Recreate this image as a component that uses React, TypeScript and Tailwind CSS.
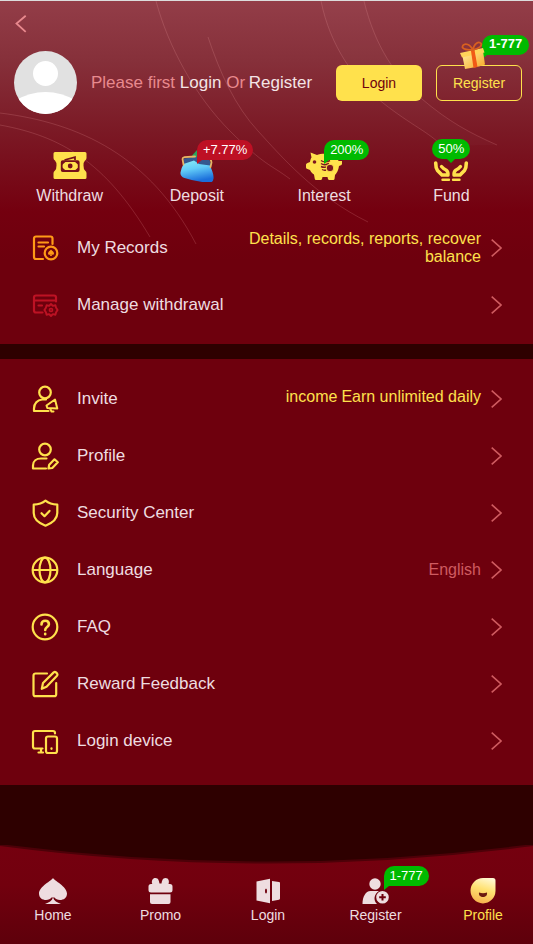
import type { ReactNode } from "react"
import clsx from "clsx"

const line = {
  width: 28,
  height: 28,
  viewBox: "0 0 28 28",
  fill: "none",
  stroke: "currentColor",
  strokeWidth: 2.2,
  strokeLinecap: "round",
  strokeLinejoin: "round",
  "aria-hidden": true,
} as const

const solid = { width: 28, height: 28, viewBox: "0 0 28 28", fill: "currentColor", "aria-hidden": true } as const

const RecordsIcon = () => (
  <svg {...line}>
    <path d="M21.500 10V4.500a2 2 0 0 0-2-2H5a2 2 0 0 0-2 2V23a2 2 0 0 0 2 2h7" />
    <path d="M7.500 8.500H17M7.500 12.500H13" />
    <circle cx="20" cy="19" r="6.300" />
    <path
      d="M20 15.500c-1 1.300-3 2.300-3 3.900 0 1.500 1.700 1.800 2.600.9l-.6 1.700h2l-.6-1.700c.9.9 2.600.6 2.600-.9 0-1.600-2-2.600-3-3.900Z"
      fill="currentColor"
      stroke="none"
    />
  </svg>
)

const CardIcon = () => (
  <svg {...line}>
    <path d="M25 10.500V6.500a2 2 0 0 0-2-2H5a2 2 0 0 0-2 2v13a2 2 0 0 0 2 2h6.500M3 9.500h22M7.500 14.500h3.500" />
    <path d="m20 13 1.800 1.900 2.600-.6.700 2.500L26.600 19l-1.500 2.200-.7 2.500-2.600-.6L20 25l-1.800-1.900-2.600.6-.7-2.500-1.500-2.200 1.500-2.200.7-2.500 2.600.6Z" strokeWidth="1.900" />
    <circle cx="20" cy="19" r="1.500" strokeWidth="1.700" />
  </svg>
)

const InviteIcon = () => (
  <svg {...line}>
    <circle cx="14" cy="7.500" r="5.800" />
    <path d="M17.500 26H3v-2.500C3 18.500 6.500 15 11 14.500h4" />
    <path d="m15.500 20.500 8.500-6 2.300 9-10-.5ZM19 23.500l1.500 3h2" strokeWidth="2" />
  </svg>
)

const ProfileIcon = () => (
  <svg {...line}>
    <circle cx="14" cy="7.500" r="5.800" />
    <path d="M15 26.500H2v-3C2 19 5.500 16.500 10 16.500h5.500" />
    <path d="m17.500 26.500.7-3.700 5.300-5.500 3.300 3-5.500 5.700Z" />
  </svg>
)

const ShieldIcon = () => (
  <svg {...line}>
    <path d="M14.500 1.700c3 2.500 7.500 3.800 11.800 4V14c0 6-5 10-11.800 12.700C7.500 24 2.700 20 2.700 14V5.700c4.300-.2 8.800-1.500 11.800-4Z" />
    <path d="m10.500 14.200 3 3 5-5.300" />
  </svg>
)

const GlobeIcon = () => (
  <svg {...line}>
    <circle cx="14" cy="14" r="12.300" />
    <ellipse cx="14" cy="14" rx="5.500" ry="12.300" />
    <path d="M2 14h24" />
  </svg>
)

const QuestionIcon = () => (
  <svg {...line}>
    <circle cx="14" cy="14" r="12.300" />
    <path d="M10.500 11.500c0-2.300 1.600-3.700 3.700-3.700s3.700 1.400 3.700 3.500c0 2.700-3.700 2.800-3.700 5.700M14.200 20.700v.6" strokeWidth="2.600" />
  </svg>
)

const EditIcon = () => (
  <svg {...line}>
    <path d="M16 3.500H4.500a2 2 0 0 0-2 2v18.700a2 2 0 0 0 2 2h18.700a2 2 0 0 0 2-2V13" />
    <path d="m10.800 18.800 1.200-5.800L22.700 2.400q1.200-.9 2.300 0l1 1q.9 1.100 0 2.300L15.500 16.700Z" />
  </svg>
)

const DeviceIcon = () => (
  <svg {...line}>
    <path d="M24 6.500V6a2 2 0 0 0-2-2H4a2 2 0 0 0-2 2v13.500a2 2 0 0 0 2 2h7.500M10 21.500V25M7.500 25.500H12" />
    <rect x="15" y="9.500" width="11" height="16.500" rx="2" />
    <path d="M20.500 21.500v.3" strokeWidth="2.300" />
  </svg>
)

const Chevron = () => (
  <svg width="11" height="18" viewBox="0 0 11 18" fill="none" stroke="#cf5b60" strokeWidth="1.600" aria-hidden="true">
    <path d="m.7.7 9.300 8.300-9.300 8.300" />
  </svg>
)

const TicketIcon = () => (
  <svg width="36" height="32" viewBox="0 0 36 32" aria-hidden="true">
    <path
      d="M3 2h30q1.500 0 1.500 1.500V8q0 1.500-1.500 2.500-1.500 1.500-1.500 5t1.500 5q1.500 1 1.500 2.500v4.500q0 1.500-1.500 1.500H3q-1.500 0-1.500-1.500V23q0-1.500 1.500-2.500 1.500-1.500 1.500-5T3 10.500Q1.500 9.500 1.500 8V3.500Q1.500 2 3 2Z"
      fill="#ffe14c"
    />
    <rect x="9.700" y="11.200" width="17" height="9.800" rx="1" fill="none" stroke="#76101a" strokeWidth="1.800" />
    <path d="M10 11.500h4l-4 3.500ZM26.500 11.500h-4l4 3.500ZM10 20.800h4l-4-3.500ZM26.500 20.800h-4l4-3.500Z" fill="#76101a" />
    <circle cx="18.200" cy="16" r="2.400" fill="#76101a" />
    <path d="m12.500 10 10.500-2.800V10" fill="none" stroke="#76101a" strokeWidth="1.700" />
  </svg>
)

const PurseIcon = () => (
  <svg width="36" height="32" viewBox="0 0 36 32" aria-hidden="true">
    <defs>
      <linearGradient id="purse" x1="0" y1="0" x2="0.300" y2="1">
        <stop offset="0" stopColor="#8beef5" />
        <stop offset="0.450" stopColor="#62ccf8" />
        <stop offset="1" stopColor="#1b6edb" />
      </linearGradient>
    </defs>
    <path d="m12 9 1.500-4L18 0v10Z" fill="#2ba45b" />
    <path d="M4.500 8.500 18 7l11.500 1 3 7-4 3L5 15Z" fill="#35588f" />
    <path
      d="M4.500 14 15 10.500 20 14l11 1.500c1.500 4 4 8.500 3.500 13q-.5 4.500-5 4-12-.5-24-4.500-4.500-1.500-4-5.500Q2 18.500 4.500 14Z"
      fill="url(#purse)"
    />
    <path d="M4.500 14.500 3.500 9q0-1.500 2-1.800L16 6.500M31.500 17l1-4.500Q32 8 28.500 7.500" fill="none" stroke="#e6b667" strokeWidth="1.800" strokeLinecap="round" />
  </svg>
)

const PiggyIcon = () => (
  <svg width="36" height="32" viewBox="0 0 36 32" aria-hidden="true">
    <path
      d="M4.500 2.500 11 5c3-1.500 13-2 17 .5 2.500 1.500 4 3.500 4.500 5.500h4.500l-1.500 4-2.500 1c-.5 4-2 7-4 9l-.5 4q-.2 1-1.200 1h-4q-1 0-1.300-1l-.5-2h-5l-.5 2q-.3 1-1.300 1H10q-1 0-1.200-1L8 24.500c-1.500-1-3-2.500-4-4.500L1.500 19Q0 18.500 0 17.500v-3q0-1 1.500-1.500L4 12c.3-2 .8-3.500 1.500-4.500Z"
      fill="#ffe14c"
    />
    <circle cx="8.500" cy="12" r="1.800" fill="#7d1720" />
    <g stroke="#7d1720" strokeWidth="1.400" fill="none">
      <path d="M15 10.500c2 1.500 6 1.500 9 0M15 13.500c2 1.500 5 1.500 8 0M15 16.500c2 1 3.500 1 5 .5M16 19.500c1.500.8 3 .8 4 .5" />
    </g>
    <circle cx="24" cy="18" r="3.800" fill="#7d1720" stroke="#ffe14c" />
  </svg>
)

const HandsIcon = () => (
  <svg width="36" height="32" viewBox="0 0 36 32" fill="none" stroke="#ffe14c" strokeLinecap="round" strokeLinejoin="round" aria-hidden="true">
    <path d="M2.700 13c0 3 0 5 1.800 7.500L9 25h5M33.300 13c0 3 0 5-1.800 7.500L27 25h-5" strokeWidth="3.600" />
    <path d="M8.500 16.500q2 2.500 4.500 3.500 2.300 1.500 2 5M27.500 16.500q-2 2.500-4.500 3.500-2.300 1.500-2 5" strokeWidth="3.400" />
    <path d="M9.500 29.800h6.500M20 29.800h6.500" strokeWidth="2.400" />
  </svg>
)

const GiftIcon = () => (
  <svg width="28" height="28" viewBox="0 0 28 28" aria-hidden="true">
    <defs>
      <linearGradient id="gift" x1="0" y1="0" x2="1" y2="1">
        <stop offset="0" stopColor="#fff0a0" />
        <stop offset="1" stopColor="#f8a524" />
      </linearGradient>
    </defs>
    <path d="m3 13 21-3 2 13.500-6 2L6 28Z" fill="url(#gift)" />
    <path d="m1 12 23-5 1.500 4.500L3 16.500Z" fill="#ffd45a" />
    <path d="m12 10 3.500-1 3 17-4 1Z" fill="#f15a16" />
    <path d="M14 9C9 0 3 3 3.500 6.500 5 9 10 9 14 9ZM14 9c1-7 6-9 8-6.500Q24 6 14 9Z" fill="none" stroke="#d9601f" strokeWidth="1.800" />
  </svg>
)

const SpadeIcon = () => (
  <svg {...solid}>
    <path d="M14 1c1 2.500 14 8.500 14 15.500 0 4.500-3.500 6.500-7 6.500-2.500 0-4.500-1-5.500-2.500h-3C11.500 22 9.500 23 7 23c-3.500 0-7-2-7-6.500C0 9.500 13 3.500 14 1Z" />
    <path d="M14 20.500c1 3.500 4 5 8 6.500H6c4-1.500 7-3 8-6.500Z" />
  </svg>
)

const PromoIcon = () => (
  <svg {...solid}>
    <path d="M8.500 1C5.500 1 4.500 3.500 5 6.500l.5.500H4Q1.500 7 1.500 9.500V13q0 2.500 2.500 2.500h19q2.500 0 2.500-2.500V9.500Q25.500 7 23 7h-1.500C22.500 4 21.500 1 18.500 1 15.500 1 15 4 14.500 6.500h-2C12 4 11.500 1 8.500 1Z" />
    <path d="M3 17.200h20.500v7.800q0 2-2 2H5q-2 0-2-2Z" />
  </svg>
)

const DoorIcon = () => (
  <svg {...solid}>
    <path
      fillRule="evenodd"
      d="M2.500 4.500 16 1.800v24.500L2.500 23.500ZM12 11.500q-1 0-1 2.500t1 2.500 1-2.500-1-2.500Z"
    />
    <path d="m18 4 7 1q1 .2 1 1v15.500q0 1-1 1.200L18 24Z" />
  </svg>
)

const AddUserIcon = () => (
  <svg {...solid}>
    <circle cx="13" cy="7" r="5.700" />
    <path d="M.5 27c0-7 3-13 8-13h8.500c-5 3-6 9-2 13Z" />
    <path fillRule="evenodd" d="M20.500 14a6.300 6.300 0 1 1 0 12.600 6.300 6.300 0 0 1 0-12.600Zm-1 3v2.300h-2.300v2h2.300v2.300h2v-2.300h2.300v-2h-2.300V17Z" />
  </svg>
)

const FaceIcon = () => (
  <svg {...solid}>
    <defs>
      <linearGradient id="face" x1="0.700" y1="0" x2="0.400" y2="1">
        <stop offset="0" stopColor="#fff8d2" />
        <stop offset="0.450" stopColor="#ffe272" />
        <stop offset="1" stopColor="#f7b24e" />
      </linearGradient>
    </defs>
    <path d="M14 1h10q2.500 0 2.500 2.500V14A12.500 12.700 0 1 1 14 1Z" fill="url(#face)" />
    <path d="M10 15.500q4 1.500 8 0c.5 3-1.500 4.500-4 4.500s-4.500-1.500-4-4.500Z" fill="#6b1a10" />
  </svg>
)

type BadgeProps = { children: ReactNode; className?: string; tail?: "left" | "center" }

function Badge({ children, className, tail = "left" }: BadgeProps) {
  return (
    <span
      className={clsx(
        "pointer-events-none absolute flex h-5 items-center rounded-full pb-0.5 text-[13px] leading-none whitespace-nowrap",
        className,
      )}
    >
      {tail === "left" && (
        <svg className="absolute top-2.5 left-0" width="12" height="14" viewBox="0 0 12 14" fill="currentColor" aria-hidden="true">
          <path d="M0 0v14l5-4h7V0Z" />
        </svg>
      )}
      {tail === "center" && (
        <svg className="absolute top-5 left-1/2 -translate-x-1/2" width="8" height="4" viewBox="0 0 8 4" fill="currentColor" aria-hidden="true">
          <path d="M0 0h8L4 4Z" />
        </svg>
      )}
      <span className="relative text-white">{children}</span>
    </span>
  )
}

const actions = [
  { label: "Withdraw", icon: <TicketIcon /> },
  {
    label: "Deposit",
    icon: <PurseIcon />,
    badge: <Badge className="-top-2.5 left-[18px] bg-[#be1024] px-1.5 text-[#be1024]">+7.77%</Badge>,
  },
  {
    label: "Interest",
    icon: <PiggyIcon />,
    badge: <Badge className="-top-2.5 left-[18px] bg-[#00ba00] px-1.5 text-[#00ba00]">200%</Badge>,
  },
  {
    label: "Fund",
    icon: <HandsIcon />,
    badge: (
      <Badge tail="center" className="-top-[11px] left-1/2 -translate-x-1/2 bg-[#00ba00] px-1.5 text-[#00ba00]">
        50%
      </Badge>
    ),
  },
]

const menu = [
  {
    label: "Invite",
    icon: <InviteIcon />,
    note: (
      <span className="mb-1 flex justify-end gap-1 whitespace-nowrap text-[#ffe14c]">
        <span>income</span>
        <span>Earn unlimited daily</span>
      </span>
    ),
  },
  { label: "Profile", icon: <ProfileIcon /> },
  { label: "Security Center", icon: <ShieldIcon /> },
  { label: "Language", icon: <GlobeIcon />, note: <span className="text-[#cf5b60]">English</span> },
  { label: "FAQ", icon: <QuestionIcon /> },
  { label: "Reward Feedback", icon: <EditIcon /> },
  { label: "Login device", icon: <DeviceIcon /> },
]

const tabs = [
  { label: "Home", icon: <SpadeIcon /> },
  { label: "Promo", icon: <PromoIcon /> },
  { label: "Login", icon: <DoorIcon /> },
  {
    label: "Register",
    icon: <AddUserIcon />,
    badge: <Badge className="-top-[11px] left-[22px] bg-[#00ba00] px-1.5 text-[#00ba00]">1-777</Badge>,
  },
  { label: "Profile", icon: <FaceIcon />, active: true },
]

type RowProps = { label: string; icon: ReactNode; note?: ReactNode; iconClass?: string }

function Row({ label, icon, note, iconClass = "text-[#ffe14c]" }: RowProps) {
  return (
    <li>
      <a href="#" className="flex h-[57px] items-center px-[31px]">
        <span className={iconClass}>{icon}</span>
        <span className="ml-[18px] text-[17px] whitespace-nowrap">{label}</span>
        <span className="mr-2.5 ml-auto flex max-w-[240px] text-right text-base leading-[18px]">{note}</span>
        <Chevron />
      </a>
    </li>
  )
}

function Swirls() {
  return (
    <svg
      className="pointer-events-none absolute top-0 left-0 h-[260px] w-full"
      viewBox="0 0 533 260"
      preserveAspectRatio="none"
      fill="none"
      stroke="#ffb4b4"
      strokeOpacity="0.180"
      aria-hidden="true"
    >
      <path d="M156 0C168 45 195 95 230 130S270 163 290 178" />
      <path d="M208 36C220 72 235 105 258 130S315 195 368 221" />
      <path d="M321 0C330 45 355 80 383 102S430 132 442 145" />
      <path d="M364 0C375 45 395 75 422 98S470 132 497 144" />
      <path d="M0 124C60 135 105 160 150 236" />
      <path d="M0 112C80 122 150 155 196 243" />
      <path
        d="M321 0C330 45 355 80 383 102S430 132 442 145L497 144C470 132 450 122 422 98S375 45 364 0Z"
        fill="#fff"
        fillOpacity="0.020"
        stroke="none"
      />
    </svg>
  )
}

export default function App() {
  return (
    <div className="flex min-h-screen flex-col bg-[#2e0000] font-['Liberation_Sans',Arial,sans-serif] text-[#eedde0]">
      <header className="relative border-t border-[#dcdcdc] bg-[#6e000d] bg-[linear-gradient(#933d48_0px,#86303a_60px,#7b1925_130px,#74000f_210px,#6e000d_260px)] pb-[11px]">
        <Swirls />
        <div className="relative">
          <button type="button" aria-label="Back" className="mt-3.5 ml-[15px] block">
            <svg width="12" height="18" viewBox="0 0 12 18" fill="none" stroke="#e8898e" strokeWidth="1.800" aria-hidden="true">
              <path d="M10.700.7 1.500 8.500l9.200 8.300" />
            </svg>
          </button>

          <div className="mt-[18px] flex items-center pr-[11px] pl-3.5">
            <svg width="63" height="63" viewBox="0 0 63 63" role="img" aria-label="Avatar">
              <clipPath id="avatar">
                <circle cx="31.500" cy="31.500" r="31.500" />
              </clipPath>
              <g clipPath="url(#avatar)">
                <path d="M0 0h63v63H0z" fill="#e1e1e1" />
                <circle cx="31.500" cy="22.500" r="12.500" fill="#fff" />
                <path d="M0 50q31.500-18 63 0v13H0z" fill="#fff" />
              </g>
            </svg>
            <p className="ml-3.5 text-[17px] whitespace-nowrap text-[#e8898e]">
              Please first{" "}
              <a href="#" className="text-[#f3e4e6]">
                Login
              </a>{" "}
              Or{" "}
              <a href="#" className="-ml-px text-[#f3e4e6]">
                Register
              </a>
            </p>
            <div className="ml-auto flex gap-3.5 text-sm">
              <button type="button" className="h-9 w-[86px] rounded-md bg-[#ffe14c] text-[#6e000d]">
                Login
              </button>
              <button type="button" className="relative h-9 w-[86px] rounded-md border border-[#ffe14c] text-[#ffe14c]">
                Register
                <Badge className="-top-[31px] left-[45px] bg-[#00ba00] px-[7px] font-bold text-[#00ba00]">1-777</Badge>
                <span className="absolute -top-[25px] left-[22px]">
                  <GiftIcon />
                </span>
              </button>
            </div>
          </div>

          <ul className="mt-9 grid grid-cols-4 pr-[18px] pl-1.5">
            {actions.map(({ label, icon, badge }) => (
              <li key={label}>
                <a href="#" className="flex flex-col items-center">
                  <span className="relative">
                    {icon}
                    {badge}
                  </span>
                  <span className="text-base leading-7">{label}</span>
                </a>
              </li>
            ))}
          </ul>

          <ul className="mt-[9px]">
            <Row
              label="My Records"
              icon={<RecordsIcon />}
              iconClass="text-[#ff9a17]"
              note={<span className="text-[#ffe14c]">Details, records, reports, recover balance</span>}
            />
            <Row label="Manage withdrawal" icon={<CardIcon />} iconClass="text-[#bd1224]" />
          </ul>
        </div>
      </header>

      <main className="mt-[15px] mb-[60px] bg-[#6e000d] pt-[11px] pb-4">
        <ul>
          {menu.map((item) => (
            <Row key={item.label} {...item} />
          ))}
        </ul>
      </main>

      <nav className="sticky bottom-0 mt-auto">
        <svg className="absolute inset-0 h-full w-full" viewBox="0 0 533 99" preserveAspectRatio="none" aria-hidden="true">
          <defs>
            <linearGradient id="bar" x1="0" y1="0" x2="0" y2="1">
              <stop offset="0" stopColor="#75000f" />
              <stop offset="0.400" stopColor="#72000e" />
              <stop offset="1" stopColor="#5e000b" />
            </linearGradient>
          </defs>
          <path d="M0 0Q266 35 533 0v99H0Z" fill="url(#bar)" />
          <path d="M0 0Q266 35 533 0" fill="none" stroke="#4d0008" strokeWidth="2" />
        </svg>
        <ul className="relative flex justify-between pt-8 pr-3.5 pb-[19px] pl-[17px]">
          {tabs.map(({ label, icon, badge, active }) => (
            <li key={label}>
              <a
                href="#"
                aria-current={active ? "page" : undefined}
                className={clsx("flex w-[72px] flex-col items-center text-sm leading-5", active && "text-[#ffe14c]")}
              >
                <span className="relative">
                  {icon}
                  {badge}
                </span>
                {label}
              </a>
            </li>
          ))}
        </ul>
      </nav>
    </div>
  )
}
